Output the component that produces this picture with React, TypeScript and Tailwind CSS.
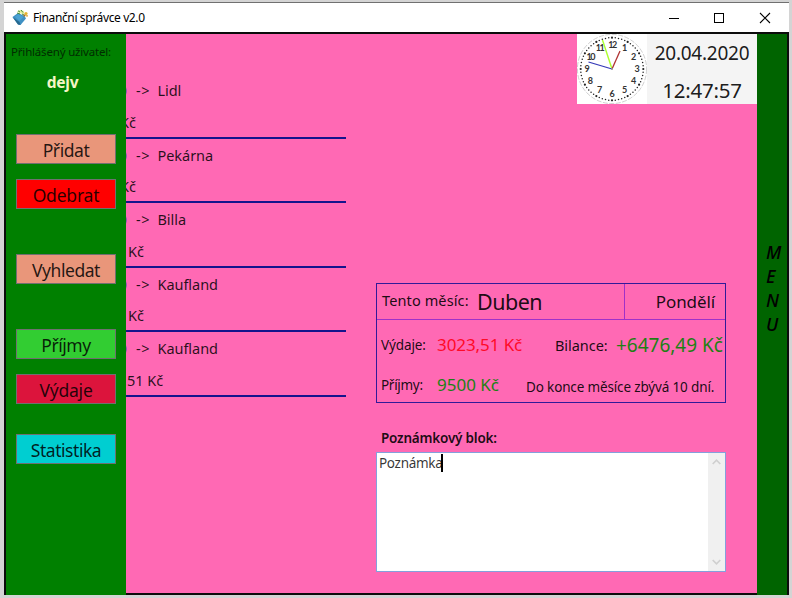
import type { ReactNode } from "react";

const entries = [
  { name: "Lidl", amount: "Kč", shift: "-ml-[6px]" },
  { name: "Pekárna", amount: "Kč", shift: "-ml-[6px]" },
  { name: "Billa", amount: "Kč", shift: "ml-[2px]" },
  { name: "Kaufland", amount: "Kč", shift: "ml-[2px]" },
  { name: "Kaufland", amount: ",51 Kč", shift: "-ml-[3px]" },
];

function TitleBar() {
  return (
    <header className="flex h-[29px] shrink-0 items-center bg-white">
      <svg className="ml-2 shrink-0" width="17" height="17" viewBox="0 0 17 17">
        <path d="M0.5 8 L6 4 L12.5 7 L14 9.5 L8.5 16 L6 15.5 Z" fill="#3f91c4" />
        <path d="M0.5 8 L6 15.5 L8.5 16 L7.5 13 Z" fill="#26698f" />
        <path d="M3 7.8 L6.5 5 L11.5 8 L7.5 12 Z" fill="#4ba2d2" />
        <path d="M5 2.5 L8 0.8 L12 2 L12.5 5.5 L7 4 Z" fill="#e6efa0" />
        <path d="M6 1.8 L8 3 M9 1 L11 3.5 M5 4 L8 5 M10 5 L12 6" stroke="#458b3b" strokeWidth="1" />
        <circle cx="14" cy="4.5" r="1.6" fill="#e5b32d" />
        <circle cx="12.5" cy="6.5" r="1.1" fill="#a66d1c" />
        <circle cx="15" cy="6.8" r="0.9" fill="#d99a22" />
      </svg>
      <span className="ml-[4px] text-[12px] leading-[16px] tracking-[-0.38px] text-black">Finanční správce v2.0</span>
      <svg className="mr-[17px] ml-auto" width="104" height="12" viewBox="0 0 104 12" fill="none" stroke="#000" strokeWidth="1" shapeRendering="crispEdges">
        <path d="M1 6.5 H11" />
        <rect x="46.5" y="1.5" width="9" height="9" />
        <path d="M92 1 L102 11 M102 1 L92 11" shapeRendering="auto" strokeWidth="1.1" />
      </svg>
    </header>
  );
}

function SideButton({ color, children }: { color: string; children: ReactNode }) {
  return (
    <button className={`flex h-[30px] w-[100px] shrink-0 items-center justify-center border border-[#707070] pt-[2px] text-[17.5px] leading-[24px] tracking-[-0.45px] text-black/85 ${color}`}>
      {children}
    </button>
  );
}

function Sidebar() {
  return (
    <aside className="flex w-[120px] shrink-0 flex-col items-center bg-[#008000]">
      <div className="mt-[9px] h-[19px] self-start pl-[5px] text-[11.5px] leading-[18px] tracking-[-0.18px] whitespace-nowrap text-[#002c00]">Přihlášený uživatel:</div>
      <div className="mt-[8px] h-[25px] pr-[7px] text-[15.5px] leading-[24px] font-bold tracking-[-0.2px] text-[#f5f5c4]">dejv</div>
      <div className="mt-[39px] flex flex-col gap-[15px]">
        <SideButton color="bg-[#e9967a]">Přidat</SideButton>
        <SideButton color="bg-[#ff0000]"><span className="tracking-[-0.2px]">Odebrat</span></SideButton>
      </div>
      <div className="mt-[45px] flex">
        <SideButton color="bg-[#e9967a]">Vyhledat</SideButton>
      </div>
      <div className="mt-[45px] flex flex-col gap-[15px]">
        <SideButton color="bg-[#32cd32]">Příjmy</SideButton>
        <SideButton color="bg-[#dc143c]"><span className="tracking-[-0.2px]">Výdaje</span></SideButton>
      </div>
      <div className="mt-[30px] flex">
        <SideButton color="bg-[#00ced1]">Statistika</SideButton>
      </div>
    </aside>
  );
}

function History() {
  return (
    <section className="mt-[40px] w-[220px] shrink-0 overflow-hidden text-[14.5px] text-black/85">
      {entries.map((e, i) => (
        <div key={i} className="h-[64.6px] border-b-2 border-[#14148c]">
          <div className="flex h-[32px] items-center leading-[20px] whitespace-nowrap">
            <span className="flex w-[1px] justify-end overflow-hidden text-[#1414a0]/70">0</span>
            <span className="ml-[9px] w-[21.5px] tracking-[0.6px]">-&gt;</span>
            <span className="tracking-[-0.05px]">{e.name}</span>
          </div>
          <div className={`flex h-[31px] items-center leading-[20px] whitespace-nowrap ${e.shift}`}>{e.amount}</div>
        </div>
      ))}
    </section>
  );
}

function Clock() {
  const numerals = Array.from({ length: 12 }, (_, i) => {
    const a = ((i + 1) * Math.PI) / 6;
    return { n: i + 1, x: 35 + 25 * Math.sin(a), y: 35 - 24.5 * Math.cos(a) };
  });
  const dots = Array.from({ length: 60 }, (_, i) => {
    const a = (i * Math.PI) / 30;
    return { x: 35 + 31.3 * Math.sin(a), y: 35 - 31.3 * Math.cos(a), r: i % 5 === 0 ? 1.1 : 0.75 };
  });
  return (
    <svg className="shrink-0 bg-white" width="70" height="70" viewBox="0 0 70 70">
      <circle cx="35" cy="35" r="34.6" fill="none" stroke="#bbb" strokeWidth="0.7" strokeDasharray="5 1.5" />
      {dots.map((d, i) => (
        <circle key={i} cx={d.x} cy={d.y} r={d.r} fill="#222" />
      ))}
      {numerals.map((m) => (
        <text key={m.n} x={m.x} y={m.y + 3.2} textAnchor="middle" fontFamily="Lato, sans-serif" fontSize="9" fontWeight="bold" letterSpacing={m.n > 9 ? "-1.4" : "0"} fill="#333">
          {m.n}
        </text>
      ))}
      <path d="M35 35 L25.5 6" stroke="#adff2f" strokeWidth="1.4" />
      <path d="M35 35 L43 17" stroke="#b03434" strokeWidth="1.3" />
      <path d="M35 35 L11.5 28" stroke="#3438b8" strokeWidth="1.3" />
      <circle cx="35" cy="35" r="1" fill="#999" />
    </svg>
  );
}

function MonthSummary() {
  return (
    <section className="flex h-[120px] w-[350px] flex-col border border-[#321a98] text-black/90">
      <div className="flex h-[36px] shrink-0 border-b border-[#a030c8]">
        <div className="flex w-[248px] items-center border-r border-[#a030c8] whitespace-nowrap">
          <span className="ml-[5px] w-[95px] pb-px text-[14.5px] tracking-[0.12px]">Tento měsíc:</span>
          <span className="pt-[1px] text-[21.5px] tracking-[-0.5px]">Duben</span>
        </div>
        <div className="flex flex-1 items-center justify-end pr-[10px] text-[17px] tracking-[-0.1px]">Pondělí</div>
      </div>
      <div className="flex h-[49px] items-center whitespace-nowrap">
        <span className="ml-[4px] w-[56px] pt-px text-[13.5px] tracking-[-0.1px]">Výdaje:</span>
        <span className="w-[118px] text-[17px] tracking-[-0.08px] text-[#ff0a28]">3023,51 Kč</span>
        <span className="w-[61px] pt-[3px] text-[14.5px] tracking-[-0.05px]">Bilance:</span>
        <span className="pt-px text-[19px] tracking-[-0.02px] text-[#1e8014]">+6476,49 Kč</span>
      </div>
      <div className="flex h-[32px] items-center whitespace-nowrap">
        <span className="ml-[4px] w-[56px] pt-px text-[13.5px] tracking-[-0.3px]">Příjmy:</span>
        <span className="w-[89px] pb-px text-[17px] text-[#1e8014]">9500 Kč</span>
        <span className="pt-[4px] text-[13.5px] tracking-[-0.15px]">Do konce měsíce zbývá 10 dní.</span>
      </div>
    </section>
  );
}

function NoteBlock() {
  return (
    <section className="mt-[25px]">
      <h2 className="ml-[5px] h-[24px] text-[13.5px] leading-[20px] font-semibold tracking-[-0.2px] text-black/90">Poznámkový blok:</h2>
      <div className="flex h-[120px] w-[350px] justify-between border border-[#84a0dc] bg-white">
        <div className="flex h-[20px] items-center pl-[2px] text-[13.5px] tracking-[-0.3px] text-black/80">
          <span className="pt-px">Poznámka</span>
          <span className="-ml-px h-[18px] w-[1.5px] bg-black" />
        </div>
        <div className="flex w-[17px] flex-col items-center justify-between bg-[#f0f0f0] py-[6px]">
          <svg width="9" height="6" viewBox="0 0 9 6" fill="none" stroke="#d0d0d0" strokeWidth="1.7">
            <path d="M0.7 5 L4.5 1.2 L8.3 5" />
          </svg>
          <svg width="9" height="6" viewBox="0 0 9 6" fill="none" stroke="#d0d0d0" strokeWidth="1.7">
            <path d="M0.7 1 L4.5 4.8 L8.3 1" />
          </svg>
        </div>
      </div>
    </section>
  );
}

export default function App() {
  return (
    <div className="h-[598px] w-[792px] overflow-hidden bg-[#d4d4d4] pt-[2px] pl-[4px] font-['Noto_Sans','Open_Sans',sans-serif]">
      <div className="flex h-[593px] w-[785px] flex-col border-t border-[#707070] bg-[#0c0c0c]">
        <TitleBar />
        <div className="mt-[2px] flex min-h-0 flex-1 px-[2px]">
          <Sidebar />
          <main className="mb-[2px] flex w-[631px] bg-[#ff69b4]">
            <History />
            <div className="flex flex-1 flex-col pl-[30px]">
              <div className="flex h-[70px] w-[180px] self-end">
                <Clock />
                <div className="flex flex-1 flex-col items-center bg-[#f4f4f4] text-black/90">
                  <div className="mt-[1px] h-[37px] text-[19px] leading-[36px] tracking-[-0.25px]">20.04.2020</div>
                  <div className="h-[32px] text-[20.5px] leading-[36px] tracking-[-0.25px]">12:47:57</div>
                </div>
              </div>
              <div className="mt-[179px]">
                <MonthSummary />
                <NoteBlock />
              </div>
            </div>
          </main>
          <nav className="flex w-[30px] shrink-0 flex-col items-center bg-[#006400] pt-[206px] pl-[6px] text-[18px] leading-[24px] font-medium text-black italic">
            <div className="flex w-[18px] flex-col items-start">
              <span>M</span>
              <span>E</span>
              <span>N</span>
              <span>U</span>
            </div>
          </nav>
        </div>
      </div>
    </div>
  );
}
